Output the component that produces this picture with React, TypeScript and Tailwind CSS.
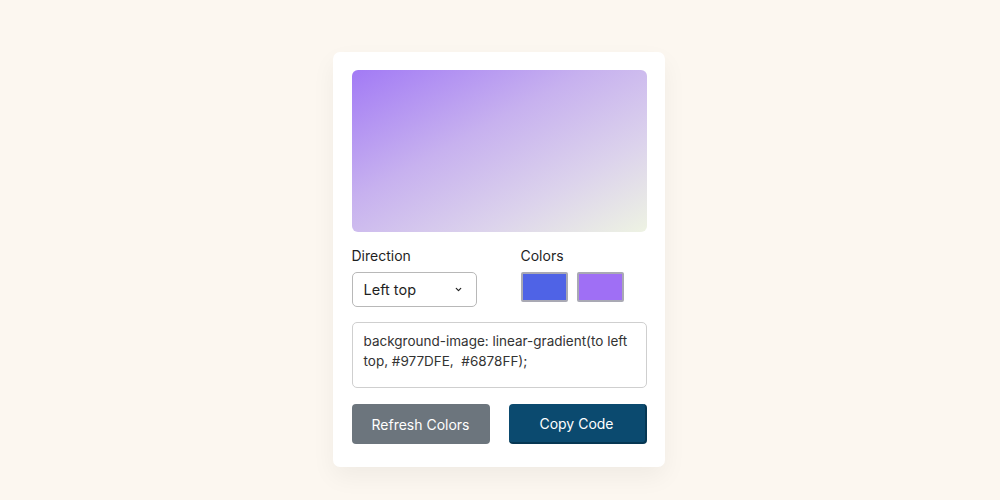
import { useState } from "react";

const font = { fontFamily: "Inter, 'Noto Sans', sans-serif" };

export default function App() {
  const [dir] = useState("Left top");

  return (
    <div className="min-h-[500px] w-full bg-[#fcf7f0] flex justify-center pt-[52px] pr-[3px]" style={font}>
      <div className="w-[332px] h-[415px] bg-white rounded-[7px] shadow-[0_10px_25px_rgba(0,0,0,0.05)] pl-[19px] pr-[18px] pt-[18px]">
        <div className="h-[162px] rounded-[6px] bg-[linear-gradient(to_bottom_right,#a27af5_0%,#c7b1ef_40%,#dcd3ec_72%,#eef3e3_100%)]" />

        <div className="grid grid-cols-[169px_1fr] mt-[14px]">
          <div>
            <p className="text-[14px] text-[#1f1f1f] leading-[20px]">Direction</p>
            <button className="mt-[6px] w-[125px] h-[35px] rounded-[5px] border border-[#b8b8b8] flex items-center justify-between pl-[11px] pr-[13px] text-[14.5px] text-[#1f1f1f]">
              {dir}
              <svg width="9" height="9" viewBox="0 0 24 24" fill="none">
                <path d="M6 9l6 6 6-6" stroke="#222" strokeWidth="3.2" strokeLinecap="round" strokeLinejoin="round" />
              </svg>
            </button>
          </div>
          <div>
            <p className="text-[14px] text-[#1f1f1f] leading-[20px]">Colors</p>
            <div className="mt-[6px] flex gap-[9px]">
              <div className="w-[47px] h-[30px] rounded-[2px] border-2 border-[#a9a9b4] bg-[#4f63e6]" />
              <div className="w-[47px] h-[30px] rounded-[2px] border-2 border-[#a9a9b4] bg-[#9f6ff5]" />
            </div>
          </div>
        </div>

        <div className="mt-[15px] h-[66px] rounded-[5px] border border-[#cfcfcf] px-[11px] pt-[8px] text-[13.5px] leading-[20px] text-[#333]">
          background-image: linear-gradient(to left top, #977DFE,&nbsp; #6878FF);
        </div>

        <div className="mt-[16px] flex justify-between">
          <button className="w-[138px] h-[40px] rounded-[4px] bg-[#6c757d] text-white text-[14px]">
            Refresh Colors
          </button>
          <button className="w-[138px] h-[40px] rounded-[4px] bg-[#0b4a6f] border-b-2 border-r-2 border-[#063753] text-white text-[14px]">
            Copy Code
          </button>
        </div>
      </div>
    </div>
  );
}
